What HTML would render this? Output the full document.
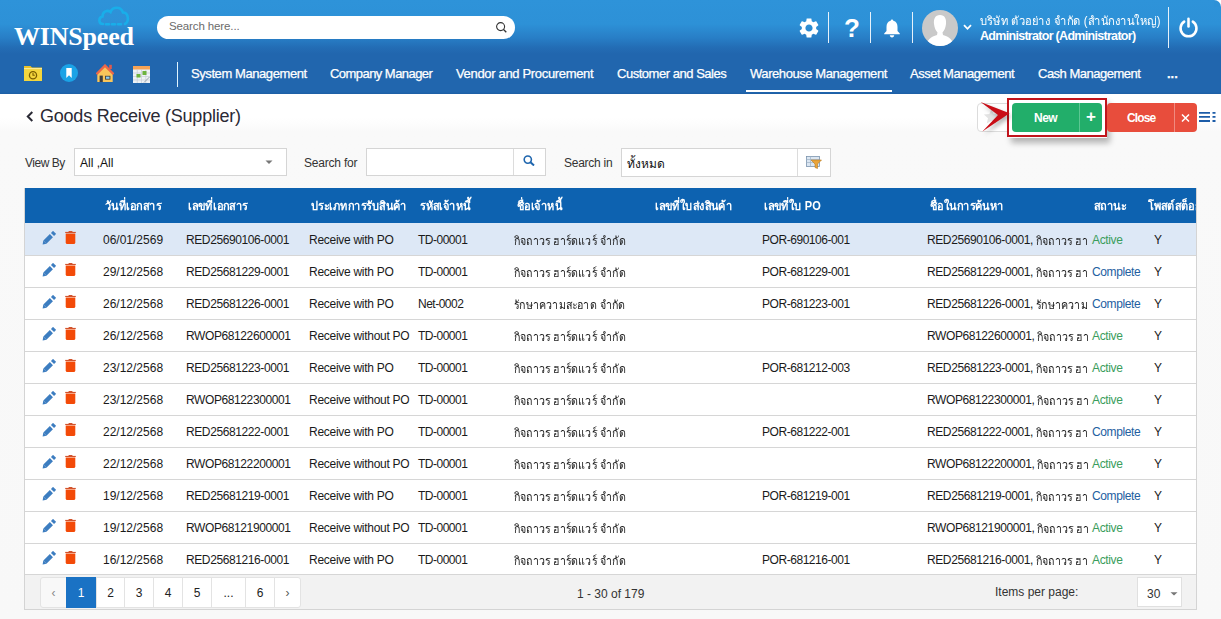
<!DOCTYPE html>
<html><head><meta charset="utf-8">
<style>
*{margin:0;padding:0;box-sizing:border-box}
html,body{width:1221px;height:619px;overflow:hidden}
body{position:relative;font-family:"Liberation Sans",sans-serif;background:#f5f5f5;color:#222}
.a{position:absolute;white-space:nowrap}
#hdr{position:absolute;left:0;top:0;width:1221px;height:94px;
 background:linear-gradient(to bottom,#2e93d9 0px,#2d91d7 24px,#287ec6 38px,#236cb4 48px,#2166ae 54px,#2166ae 92px,#1d5ea4 94px)}
#corner{position:absolute;right:0;top:0;width:7px;height:7px;background:#fff;overflow:hidden}
#corner:after{content:"";position:absolute;left:-7px;top:0;width:14px;height:14px;border-radius:7px;background:#2d91d7;}
.logo{left:14px;top:22px;font-family:"Liberation Serif",serif;font-weight:bold;font-size:26px;color:#fff;letter-spacing:-0.2px}
.pill{left:157px;top:16px;width:358px;height:23px;border-radius:12px;background:#fff}
.ph{left:169px;top:20px;font-size:11.5px;letter-spacing:-0.12px;color:#6b6b6b}
.sep{position:absolute;width:1px;background:#e6f2fb}
.hdrtxt{color:#fff;font-size:12.5px}
.nav{top:66px;font-size:13px;color:#fff;-webkit-text-stroke:0.25px #fff}
.ul{left:746px;top:90px;width:146px;height:2px;background:#fff}
#page{position:absolute;left:0;top:94px;width:1221px;height:525px;
 background:linear-gradient(to bottom,#ffffff 0px,#ffffff 24px,#f9f9f9 38px,#f8f8f8 526px)}
.title{left:40px;top:105.5px;font-size:18px;letter-spacing:-0.22px;color:#2a2a35}
.lbl{font-size:12px;color:#333;top:156px}
.box{position:absolute;background:#fff;border:1px solid #d5d5d5}
#tbl{position:absolute;left:24px;top:188px;width:1173px;height:422px;background:#fff;border:1px solid #d4d4d4;border-top:none}
.thd{position:absolute;left:25px;top:188px;width:1171px;height:35px;background:#0d62b0}
.thd span{position:absolute;top:4px;height:24px;padding-top:4px;overflow:hidden;font-size:12px;color:#fff;font-weight:bold;white-space:nowrap;transform:scaleX(0.92);transform-origin:0 0}
.row{position:absolute;left:25px;width:1171px;height:32px;background:#fff}
.row:before{content:"";position:absolute;left:0;top:0;width:100%;height:1px;background:#d6d6d6}
.row.first:before{display:none}
.row.sel{background:#dde8f6}
.row .t{position:absolute;top:10px;font-size:12px;color:#1a1a1a;white-space:nowrap}
.row .th{top:4px;padding-top:4px;height:24px;width:127px;overflow:hidden;transform:scaleX(0.89);transform-origin:0 0}
.sc{position:absolute;left:902px;top:0;width:161px;height:31px;overflow:hidden;display:flex;align-items:flex-start;font-size:12px;color:#1a1a1a;white-space:nowrap}
.sc .en{margin-top:10px;letter-spacing:-0.4px;flex:none}
.th2{margin-top:8px;flex:none;transform:scaleX(0.89);transform-origin:0 0}
.row .c{position:absolute}
.clip{overflow:hidden}
.st-a{color:#3a9d5c !important}
.st-c{color:#22609f !important}
.ic{display:block}
.pgbar{position:absolute;left:25px;top:574px;width:1171px;height:35px;background:#f2f2f2;border-top:1px solid #d6d6d6}
.pb{position:absolute;top:577px;height:31px;background:#fff;border:1px solid #e3e3e3;font-size:12px;color:#222;text-align:center;line-height:30px}
.pb.act{background:#1a72c4;border-color:#1a72c4;color:#fff}
.btn{position:absolute;border-radius:4px;color:#fff;font-size:12px;font-weight:bold}
</style></head><body>
<div id="hdr"></div>
<div id="corner"></div>
<!-- logo -->
<svg class="a" style="left:97px;top:4px" width="34" height="24" viewBox="0 0 34 24">
 <path d="M6 20 C1.5 20 1 13.5 5.5 12.5 C5.5 7.5 10.5 5.5 13.5 8 C15.5 2.5 24 2 26 8.5 C31.5 8.5 32.5 17.5 28 20" fill="none" stroke="#19aee9" stroke-width="2.6" stroke-linecap="round"/>
 <path d="M9 20.2 H12 M15 20.2 H18 M21 20.2 H24" stroke="#19aee9" stroke-width="2.6" stroke-linecap="round"/>
</svg>
<div class="a logo">WINSpeed</div>
<div class="a pill"></div>
<div class="a ph">Search here...</div>
<svg class="a" style="left:495px;top:21px" width="13" height="13" viewBox="0 0 13 13"><circle cx="5.6" cy="5.6" r="4" fill="none" stroke="#333" stroke-width="1.1"/><path d="M8.5 8.5 L11.3 11.3" stroke="#333" stroke-width="1.3"/></svg>
<!-- right icons -->
<svg class="a" style="left:797px;top:16px" width="24" height="24" viewBox="0 0 24 24"><path fill="#fff" d="M19.14 12.94c.04-.3.06-.61.06-.94 0-.32-.02-.64-.07-.94l2.03-1.58c.18-.14.23-.41.12-.61l-1.92-3.32c-.12-.22-.37-.29-.59-.22l-2.39.96c-.5-.38-1.03-.7-1.62-.94l-.36-2.54c-.04-.24-.24-.41-.48-.41h-3.84c-.24 0-.43.17-.47.41l-.36 2.54c-.59.24-1.13.57-1.62.94l-2.39-.96c-.22-.08-.47 0-.59.22L2.74 8.87c-.12.21-.08.47.12.61l2.03 1.58c-.05.3-.09.63-.09.94s.02.64.07.94l-2.03 1.58c-.18.14-.23.41-.12.61l1.92 3.32c.12.22.37.29.59.22l2.39-.96c.5.38 1.03.7 1.62.94l.36 2.54c.05.24.24.41.48.41h3.84c.24 0 .44-.17.47-.41l.36-2.54c.59-.24 1.13-.56 1.62-.94l2.39.96c.22.08.47 0 .59-.22l1.92-3.32c.12-.22.07-.47-.12-.61l-2.01-1.58zM12 15.6c-1.98 0-3.6-1.62-3.6-3.6s1.62-3.6 3.6-3.6 3.6 1.62 3.6 3.6-1.62 3.6-3.6 3.6z"/></svg>
<div class="sep" style="left:828px;top:12px;height:31px"></div>
<div class="a" style="left:844px;top:13px;font-size:26px;font-weight:bold;color:#fff">?</div>
<div class="sep" style="left:870px;top:12px;height:31px"></div>
<svg class="a" style="left:883px;top:19px" width="18" height="19" viewBox="0 0 18 19"><path fill="#fff" d="M9 0.5 C9.8 0.5 10.3 1.1 10.3 1.8 C13.3 2.5 14.5 5 14.5 8 L14.5 12 L16.8 14.6 L16.8 15.3 L1.2 15.3 L1.2 14.6 L3.5 12 L3.5 8 C3.5 5 4.7 2.5 7.7 1.8 C7.7 1.1 8.2 0.5 9 0.5 Z"/><path fill="#fff" d="M6.8 16.3 H11.2 C11.2 17.6 10.2 18.5 9 18.5 C7.8 18.5 6.8 17.6 6.8 16.3 Z"/></svg>
<div class="sep" style="left:912px;top:12px;height:31px"></div>
<svg class="a" style="left:922px;top:10px" width="36" height="36" viewBox="0 0 36 36"><defs><clipPath id="cc"><circle cx="18" cy="18" r="18"/></clipPath></defs><circle cx="18" cy="18" r="18" fill="#c9c9c9"/><g clip-path="url(#cc)" fill="#fff"><path d="M18 5 C23 5 24.5 9 24 14 C23.6 18 22 21 20.5 22.5 L21 25 C27 27 31 29 31 36 L5 36 C5 29 9 27 15 25 L15.5 22.5 C14 21 12.4 18 12 14 C11.5 9 13 5 18 5 Z"/></g></svg>
<svg class="a" style="left:963px;top:24px" width="9" height="7" viewBox="0 0 9 7"><path d="M1 1.2 L4.5 4.8 L8 1.2" fill="none" stroke="#fff" stroke-width="1.8"/></svg>
<div class="a hdrtxt" style="left:980px;top:7px;padding-top:4px;height:24px;width:194px;overflow:hidden;font-size:12px;transform:scaleX(0.935);transform-origin:0 0">บริษัท ตัวอย่าง จำกัด (สำนักงานใหญ่)</div>
<div class="a hdrtxt" style="left:980px;top:29px;font-weight:bold;letter-spacing:-0.7px">Administrator (Administrator)</div>
<div class="sep" style="left:1168px;top:7px;height:41px"></div>
<svg class="a" style="left:1178px;top:17px" width="21" height="21" viewBox="0 0 19 19"><path d="M5.6 4.2 A7.2 7.2 0 1 0 13.4 4.2" fill="none" stroke="#fff" stroke-width="2.3" stroke-linecap="round"/><path d="M9.5 1.5 V8.5" stroke="#fff" stroke-width="2.3" stroke-linecap="round"/></svg>
<!-- nav icons -->
<svg class="a" style="left:24px;top:65px" width="18" height="16" viewBox="0 0 18 16"><path d="M0 1 H6.5 L8 2.5 H18 V16 H0 Z" fill="#e8c22a"/><rect x="0" y="3.2" width="18" height="1.2" fill="#fff3b0"/><rect x="0" y="4.4" width="18" height="11.6" fill="#f4d63c"/><circle cx="9" cy="10.2" r="3.6" fill="none" stroke="#7a5d00" stroke-width="1.3"/><path d="M9 8 V10.3 H10.8" stroke="#7a5d00" stroke-width="1.1" fill="none"/></svg>
<svg class="a" style="left:60px;top:64px" width="18" height="18" viewBox="0 0 18 18"><circle cx="9" cy="9" r="9" fill="#1ba3e6"/><path d="M6.3 4 H11.7 V14 L9 11.2 L6.3 14 Z" fill="#fff"/></svg>
<svg class="a" style="left:96px;top:64px" width="18" height="18" viewBox="0 0 18 18"><path d="M1.3 9.5 L9 2.2 L16.7 9.5 V18 H1.3 Z" fill="#f9c65b"/><rect x="13.2" y="0.8" width="2.6" height="4.2" fill="#e15a4c"/><path d="M0.4 10.2 L9 1.6 L17.6 10.2" fill="none" stroke="#ec6749" stroke-width="2.4" stroke-linejoin="miter"/><rect x="3.6" y="11.6" width="3.2" height="6.4" fill="#3f3f3f"/><rect x="9" y="11.8" width="5.4" height="3.8" fill="#3f3f3f"/><rect x="9.9" y="12.6" width="3.6" height="2.2" fill="#8dcdf0"/></svg>
<svg class="a" style="left:133px;top:66px" width="17" height="17" viewBox="0 0 17 17"><rect x="0" y="0" width="17" height="17" fill="#eef2f6"/><rect x="0" y="0" width="17" height="3.5" fill="#f6a356"/><path d="M0 7 H17 M0 10.5 H17 M0 14 H17 M4.25 3.5 V17 M8.5 3.5 V17 M12.75 3.5 V17" stroke="#c7ced6" stroke-width="0.7"/><rect x="3.5" y="8" width="4" height="3.5" fill="#6db33f"/><rect x="9.5" y="5" width="4" height="4" fill="#6db33f"/><path d="M11 16.5 L16.5 11" stroke="#9aa3ad" stroke-width="1"/></svg>
<div class="sep" style="left:177px;top:62px;height:25px;background:#dff4ff"></div>
<div class="a nav" style="left:191px;letter-spacing:-0.42px">System Management</div>
<div class="a nav" style="left:330px;letter-spacing:-0.55px">Company Manager</div>
<div class="a nav" style="left:456px;letter-spacing:-0.33px">Vendor and Procurement</div>
<div class="a nav" style="left:617px;letter-spacing:-0.47px">Customer and Sales</div>
<div class="a nav" style="left:750px;letter-spacing:-0.43px">Warehouse Management</div>
<div class="a nav" style="left:910px;letter-spacing:-0.5px">Asset Management</div>
<div class="a nav" style="left:1038px;letter-spacing:-0.5px">Cash Management</div>
<div class="a nav" style="left:1167px;font-weight:bold">...</div>
<div class="a ul"></div>

<!-- page -->
<div id="page"></div>
<svg class="a" style="left:26px;top:111px" width="8" height="11" viewBox="0 0 8 11"><path d="M6.3 1 L1.8 5.5 L6.3 10" fill="none" stroke="#2a2a35" stroke-width="2"/></svg>
<div class="a title">Goods Receive (Supplier)</div>

<!-- buttons -->
<div class="a" style="left:977px;top:103px;width:34px;height:29px;background:#fff;border:1px solid #dcdcdc;border-radius:4px"></div>
<svg class="a" style="left:983px;top:108px" width="17" height="17" viewBox="0 0 24 24"><path d="M12 1.5 L15 8.6 L22.8 9.2 L16.9 14.3 L18.7 21.9 L12 17.9 L5.3 21.9 L7.1 14.3 L1.2 9.2 L9 8.6 Z" fill="#e3e3e3"/></svg>
<div class="a" style="left:1008px;top:98px;width:99px;height:40px;box-shadow:3px 5px 6px rgba(0,0,0,0.28)"></div>
<div class="a" style="left:1007px;top:98px;width:100px;height:39px;border:2.5px solid #c1141c;background:#fff"></div>
<div class="btn" style="left:1012px;top:103px;width:90px;height:29px;background:#22ae6a"></div>
<div class="a" style="left:1079px;top:103px;width:1px;height:29px;background:#5cc792"></div>
<div class="a" style="left:1034px;top:111px;font-size:12px;font-weight:bold;letter-spacing:-0.5px;color:#fff">New</div>
<div class="a" style="left:1086px;top:107px;font-size:17px;font-weight:bold;color:#fff">+</div>
<div class="btn" style="left:1107px;top:103px;width:90px;height:29px;background:#e84d3c"></div>
<div class="a" style="left:1174px;top:103px;width:1px;height:29px;background:#f08a7f"></div>
<div class="a" style="left:1127px;top:111px;font-size:12px;font-weight:bold;letter-spacing:-0.9px;color:#fff">Close</div>
<svg class="a" style="left:1181px;top:114px" width="9" height="8" viewBox="0 0 9 8"><path d="M1 0.5 L8 7.5 M8 0.5 L1 7.5" stroke="#fff" stroke-width="1.5"/></svg>
<svg class="a" style="left:980px;top:101px;filter:drop-shadow(2px 3px 2px rgba(0,0,0,0.3))" width="32" height="32" viewBox="0 0 32 32"><path d="M0.6 1 L29.6 12.3 L2.4 30.4 L18 13.9 Z" fill="#c90d16"/></svg>
<svg class="a" style="left:1199px;top:111px" width="18" height="12" viewBox="0 0 18 12"><path d="M0 1.8 H11 M0 5.8 H11 M0 10 H11 M13.5 1.8 H16.5 M13.5 5.8 H16.5 M13.5 10 H16.5" stroke="#1c5ca8" stroke-width="1.8"/></svg>

<!-- filter row -->
<div class="a lbl" style="left:25px;letter-spacing:-0.5px">View By</div>
<div class="box" style="left:74px;top:148px;width:213px;height:28px"></div>
<div class="a" style="left:80px;top:156px;font-size:12px;color:#111">All ,All</div>
<svg class="a" style="left:265px;top:160px" width="8" height="5" viewBox="0 0 8 5"><path d="M0.5 0.5 H7.5 L4 4 Z" fill="#777"/></svg>
<div class="a lbl" style="left:304px;letter-spacing:-0.2px">Search for</div>
<div class="box" style="left:366px;top:148px;width:180px;height:28px"></div>
<div class="a" style="left:513px;top:149px;width:1px;height:26px;background:#dcdcdc"></div>
<svg class="a" style="left:523px;top:155px" width="13" height="11" viewBox="0 0 13 11"><circle cx="4.8" cy="4.6" r="3.6" fill="none" stroke="#1f66ae" stroke-width="1.6"/><path d="M7.5 7.3 L11 10.5" stroke="#1f66ae" stroke-width="2"/></svg>
<div class="a lbl" style="left:564px;letter-spacing:-0.25px">Search in</div>
<div class="box" style="left:621px;top:148px;width:210px;height:29px"></div>
<div class="a" style="left:797px;top:149px;width:1px;height:27px;background:#dcdcdc"></div>
<div class="a" style="left:627px;top:150px;padding-top:4px;height:22px;width:60px;overflow:hidden;font-size:12px;color:#111">ทั้งหมด</div>
<svg class="a" style="left:806px;top:156px" width="16" height="13" viewBox="0 0 16 13"><rect x="0.5" y="0.5" width="13" height="10" fill="#dbe6f2" stroke="#7b93ad" stroke-width="0.8"/><path d="M0.5 3.5 H13.5 M0.5 6.5 H13.5 M4.5 0.5 V10.5" stroke="#9fb2c6" stroke-width="0.7"/><path d="M5 4 H15.5 L11.5 8 V12.5 L9 11.5 V8 Z" fill="#e9a43a" stroke="#b97a1e" stroke-width="0.6"/></svg>

<!-- table -->
<div id="tbl"></div>
<div class="thd">
<span style="left:80px;width:64px">วันที่เอกสาร</span>
<span style="left:163px;width:70px">เลขที่เอกสาร</span>
<span style="left:286px;width:106px">ประเภทการรับสินค้า</span>
<span style="left:395px;width:60px">รหัสเจ้าหนี้</span>
<span style="left:492px;width:54px">ชื่อเจ้าหนี้</span>
<span style="left:630px;width:90px">เลขที่ใบส่งสินค้า</span>
<span style="left:739px;width:68px">เลขที่ใบ PO</span>
<span style="left:905px;width:82px">ชื่อในการค้นหา</span>
<span style="left:1069px;width:40px">สถานะ</span>
<span style="left:1123px;width:52px;overflow:hidden">โพสต์สต็อก</span>
</div>
<div class="row sel first" style="top:223px"><span class="c" style="left:17px;top:8px"><svg class="ic pen" width="14" height="14" viewBox="0 0 14 14"><path d="M0.6 13.4 L1.3 9.5 L4.5 12.7 Z" fill="#3c7dc0"/><path d="M2.9 11.1 L9.4 4.6" stroke="#3c7dc0" stroke-width="4.4"/><path d="M10.5 3.5 L12.6 1.4" stroke="#3c7dc0" stroke-width="4.4"/></svg></span><span class="c" style="left:40px;top:8px"><svg class="ic tr" width="11" height="13" viewBox="0 0 11 13"><path d="M0.2 0.9 H10.8 V2 H0.2 Z" fill="#d2532c"/><path d="M3.6 0 H7.4 V1 H3.6 Z" fill="#d2532c"/><path d="M0.7 2.4 H10.3 V11.4 Q10.3 13 8.7 13 H2.3 Q0.7 13 0.7 11.4 Z" fill="#f34a08"/></svg></span><span class="t" style="left:78px">06/01/2569</span><span class="t" style="left:161px;letter-spacing:-0.4px">RED25690106-0001</span><span class="t" style="left:284px;letter-spacing:-0.28px">Receive with PO</span><span class="t" style="left:393px;letter-spacing:-0.5px">TD-00001</span><span class="t th" style="left:489px">กิจถาวร ฮาร์ดแวร์ จำกัด</span><span class="t" style="left:737px;letter-spacing:-0.45px">POR-690106-001</span><span class="sc"><span class="en">RED25690106-0001,&nbsp;</span><span class="th2">กิจถาวร ฮาร์ดแวร์ จำกัด</span></span><span class="t st-a" style="left:1067px;letter-spacing:-0.35px">Active</span><span class="t" style="left:1129px">Y</span></div>
<div class="row" style="top:255px"><span class="c" style="left:17px;top:8px"><svg class="ic pen" width="14" height="14" viewBox="0 0 14 14"><path d="M0.6 13.4 L1.3 9.5 L4.5 12.7 Z" fill="#3c7dc0"/><path d="M2.9 11.1 L9.4 4.6" stroke="#3c7dc0" stroke-width="4.4"/><path d="M10.5 3.5 L12.6 1.4" stroke="#3c7dc0" stroke-width="4.4"/></svg></span><span class="c" style="left:40px;top:8px"><svg class="ic tr" width="11" height="13" viewBox="0 0 11 13"><path d="M0.2 0.9 H10.8 V2 H0.2 Z" fill="#d2532c"/><path d="M3.6 0 H7.4 V1 H3.6 Z" fill="#d2532c"/><path d="M0.7 2.4 H10.3 V11.4 Q10.3 13 8.7 13 H2.3 Q0.7 13 0.7 11.4 Z" fill="#f34a08"/></svg></span><span class="t" style="left:78px">29/12/2568</span><span class="t" style="left:161px;letter-spacing:-0.4px">RED25681229-0001</span><span class="t" style="left:284px;letter-spacing:-0.28px">Receive with PO</span><span class="t" style="left:393px;letter-spacing:-0.5px">TD-00001</span><span class="t th" style="left:489px">กิจถาวร ฮาร์ดแวร์ จำกัด</span><span class="t" style="left:737px;letter-spacing:-0.45px">POR-681229-001</span><span class="sc"><span class="en">RED25681229-0001,&nbsp;</span><span class="th2">กิจถาวร ฮาร์ดแวร์ จำกัด</span></span><span class="t st-c" style="left:1067px;letter-spacing:-0.4px">Complete</span><span class="t" style="left:1129px">Y</span></div>
<div class="row" style="top:287px"><span class="c" style="left:17px;top:8px"><svg class="ic pen" width="14" height="14" viewBox="0 0 14 14"><path d="M0.6 13.4 L1.3 9.5 L4.5 12.7 Z" fill="#3c7dc0"/><path d="M2.9 11.1 L9.4 4.6" stroke="#3c7dc0" stroke-width="4.4"/><path d="M10.5 3.5 L12.6 1.4" stroke="#3c7dc0" stroke-width="4.4"/></svg></span><span class="c" style="left:40px;top:8px"><svg class="ic tr" width="11" height="13" viewBox="0 0 11 13"><path d="M0.2 0.9 H10.8 V2 H0.2 Z" fill="#d2532c"/><path d="M3.6 0 H7.4 V1 H3.6 Z" fill="#d2532c"/><path d="M0.7 2.4 H10.3 V11.4 Q10.3 13 8.7 13 H2.3 Q0.7 13 0.7 11.4 Z" fill="#f34a08"/></svg></span><span class="t" style="left:78px">26/12/2568</span><span class="t" style="left:161px;letter-spacing:-0.4px">RED25681226-0001</span><span class="t" style="left:284px;letter-spacing:-0.28px">Receive with PO</span><span class="t" style="left:393px;letter-spacing:-0.5px">Net-0002</span><span class="t th" style="left:489px">รักษาความสะอาด จำกัด</span><span class="t" style="left:737px;letter-spacing:-0.45px">POR-681223-001</span><span class="sc"><span class="en">RED25681226-0001,&nbsp;</span><span class="th2">รักษาความสะอาด จำกัด</span></span><span class="t st-c" style="left:1067px;letter-spacing:-0.4px">Complete</span><span class="t" style="left:1129px">Y</span></div>
<div class="row" style="top:319px"><span class="c" style="left:17px;top:8px"><svg class="ic pen" width="14" height="14" viewBox="0 0 14 14"><path d="M0.6 13.4 L1.3 9.5 L4.5 12.7 Z" fill="#3c7dc0"/><path d="M2.9 11.1 L9.4 4.6" stroke="#3c7dc0" stroke-width="4.4"/><path d="M10.5 3.5 L12.6 1.4" stroke="#3c7dc0" stroke-width="4.4"/></svg></span><span class="c" style="left:40px;top:8px"><svg class="ic tr" width="11" height="13" viewBox="0 0 11 13"><path d="M0.2 0.9 H10.8 V2 H0.2 Z" fill="#d2532c"/><path d="M3.6 0 H7.4 V1 H3.6 Z" fill="#d2532c"/><path d="M0.7 2.4 H10.3 V11.4 Q10.3 13 8.7 13 H2.3 Q0.7 13 0.7 11.4 Z" fill="#f34a08"/></svg></span><span class="t" style="left:78px">26/12/2568</span><span class="t" style="left:161px;letter-spacing:-0.4px">RWOP68122600001</span><span class="t" style="left:284px;letter-spacing:-0.28px">Receive without PO</span><span class="t" style="left:393px;letter-spacing:-0.5px">TD-00001</span><span class="t th" style="left:489px">กิจถาวร ฮาร์ดแวร์ จำกัด</span><span class="sc"><span class="en">RWOP68122600001,&nbsp;</span><span class="th2">กิจถาวร ฮาร์ดแวร์ จำกัด</span></span><span class="t st-a" style="left:1067px;letter-spacing:-0.35px">Active</span><span class="t" style="left:1129px">Y</span></div>
<div class="row" style="top:351px"><span class="c" style="left:17px;top:8px"><svg class="ic pen" width="14" height="14" viewBox="0 0 14 14"><path d="M0.6 13.4 L1.3 9.5 L4.5 12.7 Z" fill="#3c7dc0"/><path d="M2.9 11.1 L9.4 4.6" stroke="#3c7dc0" stroke-width="4.4"/><path d="M10.5 3.5 L12.6 1.4" stroke="#3c7dc0" stroke-width="4.4"/></svg></span><span class="c" style="left:40px;top:8px"><svg class="ic tr" width="11" height="13" viewBox="0 0 11 13"><path d="M0.2 0.9 H10.8 V2 H0.2 Z" fill="#d2532c"/><path d="M3.6 0 H7.4 V1 H3.6 Z" fill="#d2532c"/><path d="M0.7 2.4 H10.3 V11.4 Q10.3 13 8.7 13 H2.3 Q0.7 13 0.7 11.4 Z" fill="#f34a08"/></svg></span><span class="t" style="left:78px">23/12/2568</span><span class="t" style="left:161px;letter-spacing:-0.4px">RED25681223-0001</span><span class="t" style="left:284px;letter-spacing:-0.28px">Receive with PO</span><span class="t" style="left:393px;letter-spacing:-0.5px">TD-00001</span><span class="t th" style="left:489px">กิจถาวร ฮาร์ดแวร์ จำกัด</span><span class="t" style="left:737px;letter-spacing:-0.45px">POR-681212-003</span><span class="sc"><span class="en">RED25681223-0001,&nbsp;</span><span class="th2">กิจถาวร ฮาร์ดแวร์ จำกัด</span></span><span class="t st-a" style="left:1067px;letter-spacing:-0.35px">Active</span><span class="t" style="left:1129px">Y</span></div>
<div class="row" style="top:383px"><span class="c" style="left:17px;top:8px"><svg class="ic pen" width="14" height="14" viewBox="0 0 14 14"><path d="M0.6 13.4 L1.3 9.5 L4.5 12.7 Z" fill="#3c7dc0"/><path d="M2.9 11.1 L9.4 4.6" stroke="#3c7dc0" stroke-width="4.4"/><path d="M10.5 3.5 L12.6 1.4" stroke="#3c7dc0" stroke-width="4.4"/></svg></span><span class="c" style="left:40px;top:8px"><svg class="ic tr" width="11" height="13" viewBox="0 0 11 13"><path d="M0.2 0.9 H10.8 V2 H0.2 Z" fill="#d2532c"/><path d="M3.6 0 H7.4 V1 H3.6 Z" fill="#d2532c"/><path d="M0.7 2.4 H10.3 V11.4 Q10.3 13 8.7 13 H2.3 Q0.7 13 0.7 11.4 Z" fill="#f34a08"/></svg></span><span class="t" style="left:78px">23/12/2568</span><span class="t" style="left:161px;letter-spacing:-0.4px">RWOP68122300001</span><span class="t" style="left:284px;letter-spacing:-0.28px">Receive without PO</span><span class="t" style="left:393px;letter-spacing:-0.5px">TD-00001</span><span class="t th" style="left:489px">กิจถาวร ฮาร์ดแวร์ จำกัด</span><span class="sc"><span class="en">RWOP68122300001,&nbsp;</span><span class="th2">กิจถาวร ฮาร์ดแวร์ จำกัด</span></span><span class="t st-a" style="left:1067px;letter-spacing:-0.35px">Active</span><span class="t" style="left:1129px">Y</span></div>
<div class="row" style="top:415px"><span class="c" style="left:17px;top:8px"><svg class="ic pen" width="14" height="14" viewBox="0 0 14 14"><path d="M0.6 13.4 L1.3 9.5 L4.5 12.7 Z" fill="#3c7dc0"/><path d="M2.9 11.1 L9.4 4.6" stroke="#3c7dc0" stroke-width="4.4"/><path d="M10.5 3.5 L12.6 1.4" stroke="#3c7dc0" stroke-width="4.4"/></svg></span><span class="c" style="left:40px;top:8px"><svg class="ic tr" width="11" height="13" viewBox="0 0 11 13"><path d="M0.2 0.9 H10.8 V2 H0.2 Z" fill="#d2532c"/><path d="M3.6 0 H7.4 V1 H3.6 Z" fill="#d2532c"/><path d="M0.7 2.4 H10.3 V11.4 Q10.3 13 8.7 13 H2.3 Q0.7 13 0.7 11.4 Z" fill="#f34a08"/></svg></span><span class="t" style="left:78px">22/12/2568</span><span class="t" style="left:161px;letter-spacing:-0.4px">RED25681222-0001</span><span class="t" style="left:284px;letter-spacing:-0.28px">Receive with PO</span><span class="t" style="left:393px;letter-spacing:-0.5px">TD-00001</span><span class="t th" style="left:489px">กิจถาวร ฮาร์ดแวร์ จำกัด</span><span class="t" style="left:737px;letter-spacing:-0.45px">POR-681222-001</span><span class="sc"><span class="en">RED25681222-0001,&nbsp;</span><span class="th2">กิจถาวร ฮาร์ดแวร์ จำกัด</span></span><span class="t st-c" style="left:1067px;letter-spacing:-0.4px">Complete</span><span class="t" style="left:1129px">Y</span></div>
<div class="row" style="top:447px"><span class="c" style="left:17px;top:8px"><svg class="ic pen" width="14" height="14" viewBox="0 0 14 14"><path d="M0.6 13.4 L1.3 9.5 L4.5 12.7 Z" fill="#3c7dc0"/><path d="M2.9 11.1 L9.4 4.6" stroke="#3c7dc0" stroke-width="4.4"/><path d="M10.5 3.5 L12.6 1.4" stroke="#3c7dc0" stroke-width="4.4"/></svg></span><span class="c" style="left:40px;top:8px"><svg class="ic tr" width="11" height="13" viewBox="0 0 11 13"><path d="M0.2 0.9 H10.8 V2 H0.2 Z" fill="#d2532c"/><path d="M3.6 0 H7.4 V1 H3.6 Z" fill="#d2532c"/><path d="M0.7 2.4 H10.3 V11.4 Q10.3 13 8.7 13 H2.3 Q0.7 13 0.7 11.4 Z" fill="#f34a08"/></svg></span><span class="t" style="left:78px">22/12/2568</span><span class="t" style="left:161px;letter-spacing:-0.4px">RWOP68122200001</span><span class="t" style="left:284px;letter-spacing:-0.28px">Receive without PO</span><span class="t" style="left:393px;letter-spacing:-0.5px">TD-00001</span><span class="t th" style="left:489px">กิจถาวร ฮาร์ดแวร์ จำกัด</span><span class="sc"><span class="en">RWOP68122200001,&nbsp;</span><span class="th2">กิจถาวร ฮาร์ดแวร์ จำกัด</span></span><span class="t st-a" style="left:1067px;letter-spacing:-0.35px">Active</span><span class="t" style="left:1129px">Y</span></div>
<div class="row" style="top:479px"><span class="c" style="left:17px;top:8px"><svg class="ic pen" width="14" height="14" viewBox="0 0 14 14"><path d="M0.6 13.4 L1.3 9.5 L4.5 12.7 Z" fill="#3c7dc0"/><path d="M2.9 11.1 L9.4 4.6" stroke="#3c7dc0" stroke-width="4.4"/><path d="M10.5 3.5 L12.6 1.4" stroke="#3c7dc0" stroke-width="4.4"/></svg></span><span class="c" style="left:40px;top:8px"><svg class="ic tr" width="11" height="13" viewBox="0 0 11 13"><path d="M0.2 0.9 H10.8 V2 H0.2 Z" fill="#d2532c"/><path d="M3.6 0 H7.4 V1 H3.6 Z" fill="#d2532c"/><path d="M0.7 2.4 H10.3 V11.4 Q10.3 13 8.7 13 H2.3 Q0.7 13 0.7 11.4 Z" fill="#f34a08"/></svg></span><span class="t" style="left:78px">19/12/2568</span><span class="t" style="left:161px;letter-spacing:-0.4px">RED25681219-0001</span><span class="t" style="left:284px;letter-spacing:-0.28px">Receive with PO</span><span class="t" style="left:393px;letter-spacing:-0.5px">TD-00001</span><span class="t th" style="left:489px">กิจถาวร ฮาร์ดแวร์ จำกัด</span><span class="t" style="left:737px;letter-spacing:-0.45px">POR-681219-001</span><span class="sc"><span class="en">RED25681219-0001,&nbsp;</span><span class="th2">กิจถาวร ฮาร์ดแวร์ จำกัด</span></span><span class="t st-c" style="left:1067px;letter-spacing:-0.4px">Complete</span><span class="t" style="left:1129px">Y</span></div>
<div class="row" style="top:511px"><span class="c" style="left:17px;top:8px"><svg class="ic pen" width="14" height="14" viewBox="0 0 14 14"><path d="M0.6 13.4 L1.3 9.5 L4.5 12.7 Z" fill="#3c7dc0"/><path d="M2.9 11.1 L9.4 4.6" stroke="#3c7dc0" stroke-width="4.4"/><path d="M10.5 3.5 L12.6 1.4" stroke="#3c7dc0" stroke-width="4.4"/></svg></span><span class="c" style="left:40px;top:8px"><svg class="ic tr" width="11" height="13" viewBox="0 0 11 13"><path d="M0.2 0.9 H10.8 V2 H0.2 Z" fill="#d2532c"/><path d="M3.6 0 H7.4 V1 H3.6 Z" fill="#d2532c"/><path d="M0.7 2.4 H10.3 V11.4 Q10.3 13 8.7 13 H2.3 Q0.7 13 0.7 11.4 Z" fill="#f34a08"/></svg></span><span class="t" style="left:78px">19/12/2568</span><span class="t" style="left:161px;letter-spacing:-0.4px">RWOP68121900001</span><span class="t" style="left:284px;letter-spacing:-0.28px">Receive without PO</span><span class="t" style="left:393px;letter-spacing:-0.5px">TD-00001</span><span class="t th" style="left:489px">กิจถาวร ฮาร์ดแวร์ จำกัด</span><span class="sc"><span class="en">RWOP68121900001,&nbsp;</span><span class="th2">กิจถาวร ฮาร์ดแวร์ จำกัด</span></span><span class="t st-a" style="left:1067px;letter-spacing:-0.35px">Active</span><span class="t" style="left:1129px">Y</span></div>
<div class="row" style="top:543px"><span class="c" style="left:17px;top:8px"><svg class="ic pen" width="14" height="14" viewBox="0 0 14 14"><path d="M0.6 13.4 L1.3 9.5 L4.5 12.7 Z" fill="#3c7dc0"/><path d="M2.9 11.1 L9.4 4.6" stroke="#3c7dc0" stroke-width="4.4"/><path d="M10.5 3.5 L12.6 1.4" stroke="#3c7dc0" stroke-width="4.4"/></svg></span><span class="c" style="left:40px;top:8px"><svg class="ic tr" width="11" height="13" viewBox="0 0 11 13"><path d="M0.2 0.9 H10.8 V2 H0.2 Z" fill="#d2532c"/><path d="M3.6 0 H7.4 V1 H3.6 Z" fill="#d2532c"/><path d="M0.7 2.4 H10.3 V11.4 Q10.3 13 8.7 13 H2.3 Q0.7 13 0.7 11.4 Z" fill="#f34a08"/></svg></span><span class="t" style="left:78px">16/12/2568</span><span class="t" style="left:161px;letter-spacing:-0.4px">RED25681216-0001</span><span class="t" style="left:284px;letter-spacing:-0.28px">Receive with PO</span><span class="t" style="left:393px;letter-spacing:-0.5px">TD-00001</span><span class="t th" style="left:489px">กิจถาวร ฮาร์ดแวร์ จำกัด</span><span class="t" style="left:737px;letter-spacing:-0.45px">POR-681216-001</span><span class="sc"><span class="en">RED25681216-0001,&nbsp;</span><span class="th2">กิจถาวร ฮาร์ดแวร์ จำกัด</span></span><span class="t st-a" style="left:1067px;letter-spacing:-0.35px">Active</span><span class="t" style="left:1129px">Y</span></div>
<div class="pgbar"></div>
<div class="pb" style="left:40px;width:27px;color:#888;background:#f8f8f8;border-radius:3px 0 0 3px">&#8249;</div>
<div class="pb act" style="left:66px;width:30px">1</div>
<div class="pb" style="left:96px;width:29px">2</div>
<div class="pb" style="left:124px;width:30px">3</div>
<div class="pb" style="left:153px;width:30px">4</div>
<div class="pb" style="left:182px;width:30px">5</div>
<div class="pb" style="left:211px;width:35px">...</div>
<div class="pb" style="left:245px;width:30px">6</div>
<div class="pb" style="left:274px;width:27px;color:#555;border-radius:0 3px 3px 0">&#8250;</div>
<div class="a" style="left:577px;top:587px;font-size:12px;color:#333">1 - 30 of 179</div>
<div class="a" style="left:995px;top:585px;font-size:12px;color:#333">Items per page:</div>
<div class="box" style="left:1137px;top:577px;width:45px;height:30px;border-color:#e0e0e0"></div>
<div class="a" style="left:1147px;top:587px;font-size:12px;color:#333">30</div>
<svg class="a" style="left:1170px;top:592px" width="8" height="4" viewBox="0 0 8 4"><path d="M0.5 0.3 H7.5 L4 3.6 Z" fill="#777"/></svg>
</body></html>
